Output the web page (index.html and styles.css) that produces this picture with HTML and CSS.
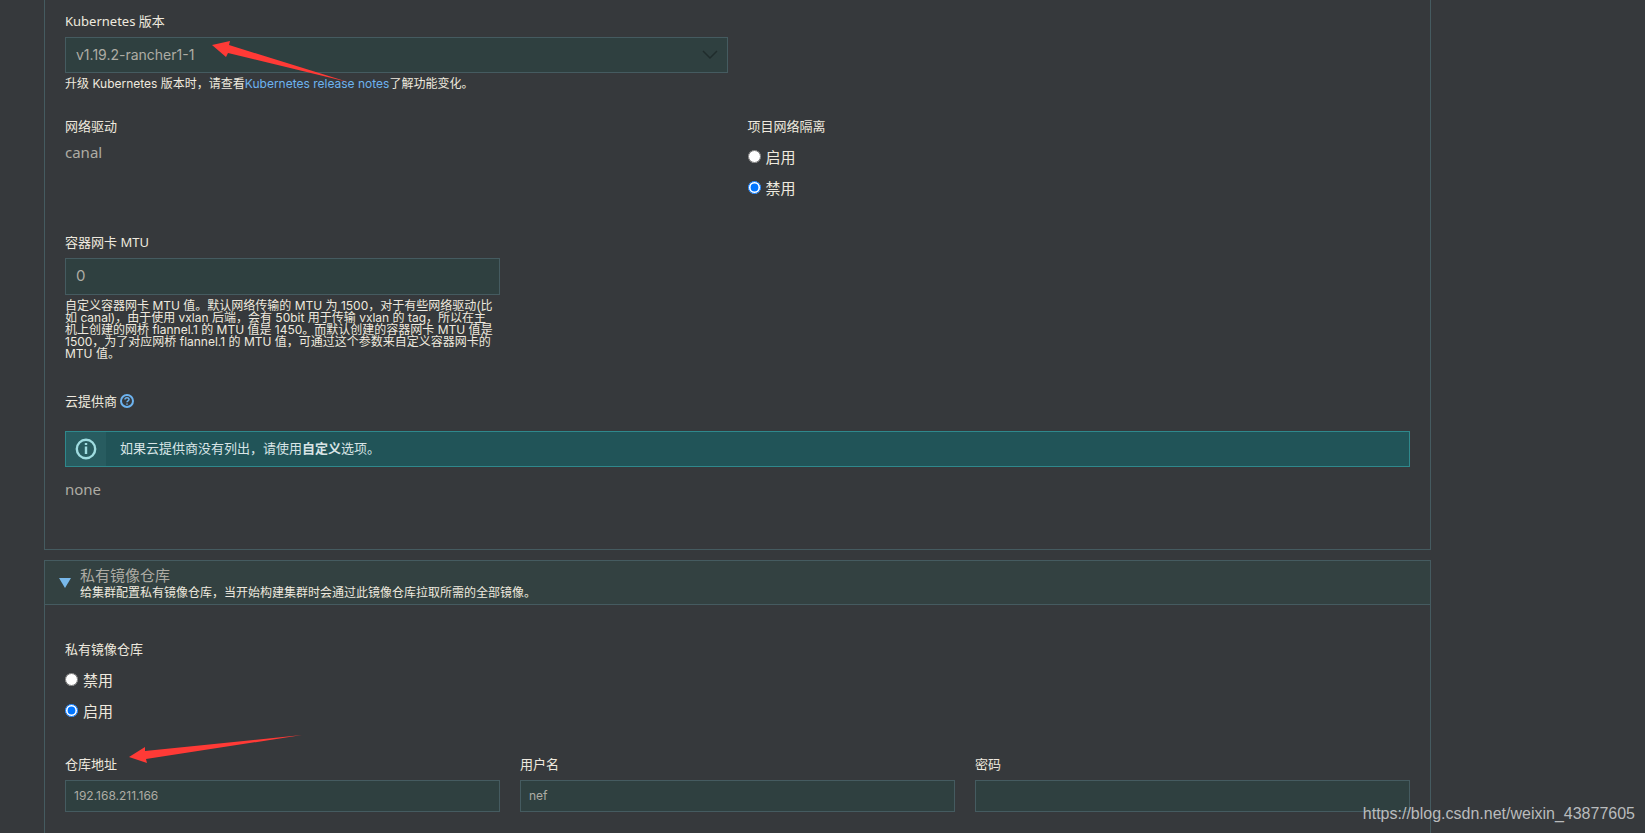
FILE: index.html
```html
<!DOCTYPE html>
<html lang="zh-CN">
<head>
<meta charset="utf-8">
<title>集群选项</title>
<link rel="stylesheet" href="styles.css">
</head>
<body>
<main class="page">
  <section class="panel panel-options">
    <div class="row cols-2">
      <div class="field">
        <label class="label" for="version">Kubernetes 版本</label>
        <div class="select-wrap">
          <select class="control control-lg" id="version"><option>v1.19.2-rancher1-1</option></select>
          <svg class="chevron" viewBox="0 0 16 10"><path d="M1 1l7 7 7-7"/></svg>
        </div>
        <p class="help">升级 Kubernetes 版本时，请查看<a href="#">Kubernetes release notes</a>了解功能变化。</p>
      </div>
    </div>

    <div class="row cols-2 row-network">
      <div class="field">
        <span class="label">网络驱动</span>
        <p class="value">canal</p>
      </div>
      <fieldset class="field">
        <legend class="label">项目网络隔离</legend>
        <label class="radio"><input type="radio" name="isolation">启用</label>
        <label class="radio"><input type="radio" name="isolation" checked>禁用</label>
      </fieldset>
    </div>

    <div class="row cols-3 row-mtu">
      <div class="field">
        <label class="label" for="mtu">容器网卡 MTU</label>
        <input class="control control-lg control-mtu" id="mtu" type="text" value="0">
        <p class="help">自定义容器网卡 MTU 值。默认网络传输的 MTU 为 1500，对于有些网络驱动(比<br>如 canal)，由于使用 vxlan 后端，会有 50bit 用于传输 vxlan 的 tag，所以在主<br>机上创建的网桥 flannel.1 的 MTU 值是 1450。而默认创建的容器网卡 MTU 值是<br>1500，为了对应网桥 flannel.1 的 MTU 值，可通过这个参数来自定义容器网卡的<br>MTU 值。</p>
      </div>
    </div>

    <div class="row row-cloud">
      <div class="label label-icon">云提供商
        <svg class="question" viewBox="0 0 14 14"><circle cx="7" cy="7" r="6"/><path d="M5 5.600c0-2.600 4-2.500 4-.2C9 6.900 7 6.800 7 8.300M7 9.500v1.300"/></svg>
      </div>
      <div class="banner">
        <div class="banner-icon">
          <svg viewBox="0 0 22 22"><circle cx="11" cy="11" r="9.200"/><path d="M11 8.500v7.500M11 5v2"/></svg>
        </div>
        <p class="banner-text">如果云提供商没有列出，请使用<b>自定义</b>选项。</p>
      </div>
      <p class="value">none</p>
    </div>
  </section>

  <section class="panel">
    <header class="panel-head">
      <svg class="caret" viewBox="0 0 12 10"><path d="M0 0h12L6 10z"/></svg>
      <div>
        <h2 class="title">私有镜像仓库</h2>
        <p class="help">给集群配置私有镜像仓库，当开始构建集群时会通过此镜像仓库拉取所需的全部镜像。</p>
      </div>
    </header>
    <div class="panel-body">
      <fieldset class="field">
        <legend class="label">私有镜像仓库</legend>
        <label class="radio"><input type="radio" name="registry">禁用</label>
        <label class="radio"><input type="radio" name="registry" checked>启用</label>
      </fieldset>
      <div class="row cols-3 row-registry">
        <div class="field">
          <label class="label" for="url">仓库地址</label>
          <input class="control" id="url" type="text" value="192.168.211.166">
        </div>
        <div class="field">
          <label class="label" for="user">用户名</label>
          <input class="control" id="user" type="text" value="nef">
        </div>
        <div class="field">
          <label class="label" for="password">密码</label>
          <input class="control" id="password" type="password">
        </div>
      </div>
    </div>
  </section>
</main>

<svg class="arrow arrow-version" viewBox="0 0 136 42"><path d="M0 4L18 0 17 4 136 41 16 12 14 16z"/></svg>
<svg class="arrow arrow-registry" viewBox="0 0 173 28"><path d="M0 22L16 12V16L173 0 17 24 18 28z"/></svg>
<div class="watermark">https://blog.csdn.net/weixin_43877605</div>
</body>
</html>
```
FILE: styles.css
```css
* { box-sizing: border-box; }

body {
  position: relative;
  margin: 0;
  height: 100vh;
  overflow: hidden;
  background: #36393c;
  color: #eee9df;
  font: 13px/16px "Noto Sans", "Noto Sans CJK SC", sans-serif;
}

p, h2 { margin: 0; font-weight: 400; }

.page { padding: 0 214px 0 44px; }

.panel {
  border: 1px solid #455b60;
  margin-bottom: 10px;
}

.panel-options {
  border-top: 0;
  padding: 13px 20px 50px;
}

.row { display: grid; column-gap: 20px; }
.cols-2 { grid-template-columns: repeat(2, minmax(0, 1fr)); }
.cols-3 { grid-template-columns: repeat(3, minmax(0, 1fr)); }
.row-network { margin-top: 28px; }
.row-mtu { margin-top: 26px; }
.row-cloud { margin-top: 33px; }
.row-registry { margin-top: 25px; }

.field { border: 0; margin: 0; padding: 0; min-width: 0; }

.label {
  display: block;
  height: 16px;
  margin-bottom: 8px;
  padding: 0;
  line-height: 16px;
}
legend.label { margin-bottom: 12px; }

.label-icon { display: flex; align-items: center; gap: 3px; margin-bottom: 22px; }

.question {
  width: 14px;
  height: 14px;
  fill: none;
  stroke: #6db3ef;
  stroke-width: 2;
}
.question path { stroke-width: 1.500; }

.control {
  display: block;
  width: 100%;
  height: 32px;
  margin: 0;
  padding: 0 8px 2px;
  border: 1px solid #455b60;
  border-radius: 0;
  outline: 0;
  appearance: none;
  background: #2f4040;
  color: #aeaca4;
  font: 12px/16px Inter, "Noto Sans", sans-serif;
}

.control-lg { height: 36px; padding: 0 10px; font-size: 14px; }
.control-mtu { height: 37px; padding-bottom: 2px; font-size: 15px; }

.select-wrap { position: relative; }
.chevron {
  position: absolute;
  right: 10px;
  top: 13px;
  width: 16px;
  height: 10px;
  fill: none;
  stroke: #202c2c;
  stroke-width: 1.500;
  pointer-events: none;
}

.help {
  margin-top: 5px;
  font: 12px/12px Inter, "Noto Sans CJK SC", sans-serif;
  white-space: nowrap;
}
a { color: #6db3ef; text-decoration: none; }

.value { color: #aeaca4; font-size: 15px; line-height: 20px; }

.radio {
  display: flex;
  align-items: center;
  gap: 5px;
  height: 21px;
  margin-bottom: 10px;
  font-size: 15px;
}
.radio input { width: 13px; height: 13px; margin: 0; }

.banner {
  display: flex;
  height: 36px;
  margin-bottom: 12px;
  border: 1px solid #2f888c;
  background: #215458;
  color: #d8e4e6;
}
.banner-icon {
  display: grid;
  place-items: center;
  width: 40px;
  background: #285c60;
}
.banner-icon svg {
  width: 22px;
  height: 22px;
  fill: none;
  stroke: #9fdce0;
  stroke-width: 2.400;
}
.banner-text { padding: 8px 14px; }

.panel-head {
  display: flex;
  align-items: center;
  gap: 9px;
  height: 44px;
  padding: 0 14px;
  border-bottom: 1px solid #455b60;
  background: #334141;
}
.panel-head .help { margin-top: 3px; }
.caret { width: 12px; height: 10px; fill: #78b8ea; }
.title { color: #aeaca4; font-size: 15px; line-height: 17px; }

.panel-body { padding: 36px 20px 40px; }

.arrow { position: absolute; fill: #ff3a36; }
.arrow-version { left: 212px; top: 41px; width: 136px; height: 42px; }
.arrow-registry { left: 129px; top: 735px; width: 173px; height: 28px; }

.watermark {
  position: absolute;
  right: 10px;
  bottom: 10px;
  color: #b9bbbc;
  font: 16px/18px "Liberation Sans", Arial, sans-serif;
}
```
